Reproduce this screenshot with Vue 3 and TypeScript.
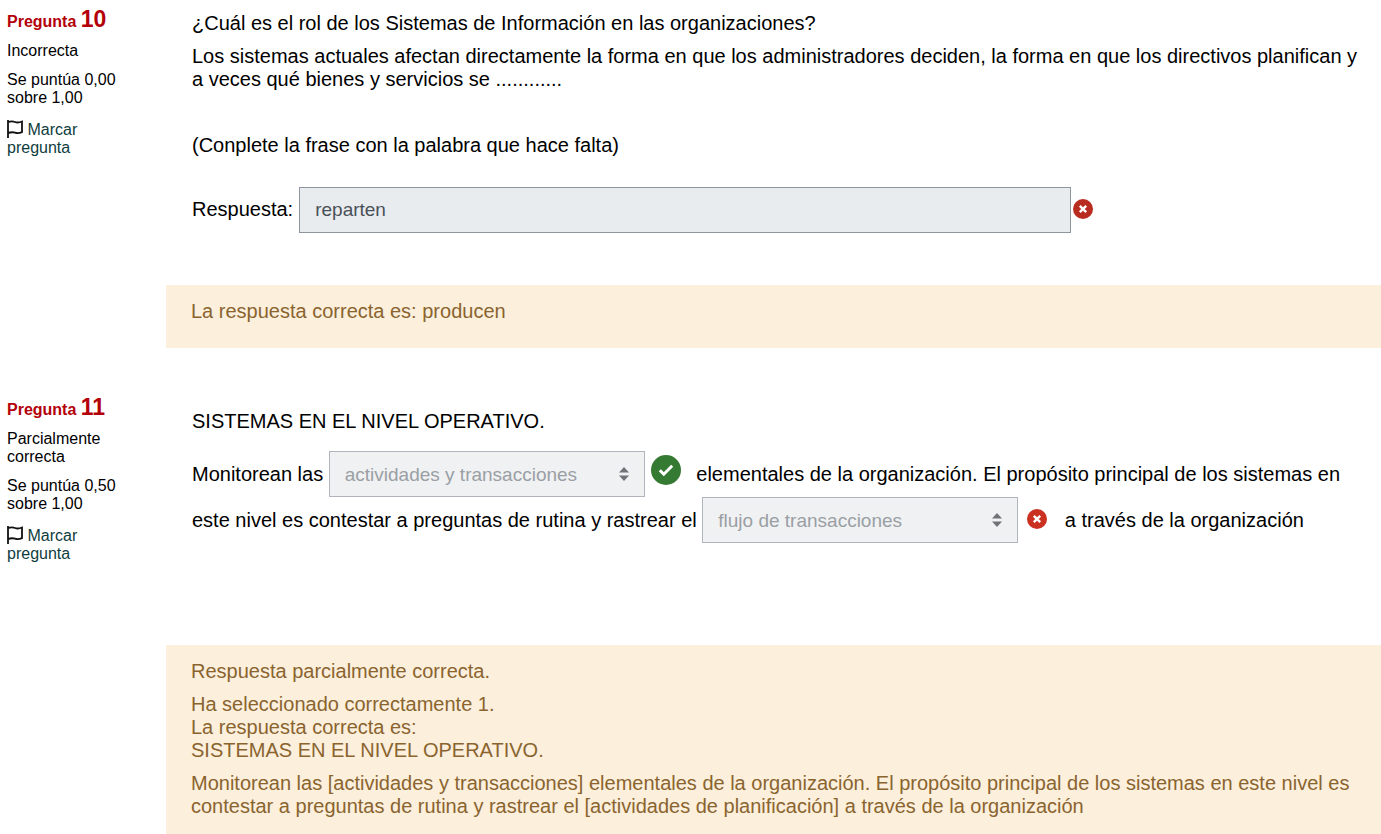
<script setup lang="ts">
import { ref } from 'vue'

const answer = ref('reparten')
const firstGap = ref('actividades y transacciones')
const secondGap = ref('flujo de transacciones')
</script>

<template>
  <main class="review">
    <section class="question">
      <aside class="info">
        <h3 class="number">Pregunta <span>10</span></h3>
        <div class="state">Incorrecta</div>
        <div class="grade">Se puntúa 0,00 sobre 1,00</div>
        <a class="flag" href="#">
          <svg width="16" height="18" viewBox="0 0 16 18" aria-hidden="true">
            <path d="M1 0v18M1 2.2C4 1 6 1.200 8 2s4 .8 7-.5v10.700c-3 1.300-5 1.200-7 .5s-4-.8-7 .5" />
          </svg>
          Marcar pregunta</a>
      </aside>
      <div class="content">
        <div class="formulation">
          <p>¿Cuál es el rol de los Sistemas de Información en las organizaciones?</p>
          <p>Los sistemas actuales afectan directamente la forma en que los administradores deciden, la forma en que los directivos planifican y a veces qué bienes y servicios se ............</p>
          <p><br></p>
          <p>(Conplete la frase con la palabra que hace falta)</p>
          <div class="answer">
            <label for="answer10">Respuesta:</label>
            <input id="answer10" v-model="answer" type="text" readonly>
            <svg class="cross" viewBox="0 0 20 20" role="img" aria-label="Incorrecta">
              <circle cx="10" cy="10" r="10" fill="#b92d20" />
              <path d="M6.800 6.800l6.400 6.400M13.200 6.800l-6.400 6.400" />
            </svg>
          </div>
        </div>
        <div class="feedback short">
          <p>La respuesta correcta es: producen</p>
        </div>
      </div>
    </section>

    <section class="question">
      <aside class="info">
        <h3 class="number">Pregunta <span>11</span></h3>
        <div class="state">Parcialmente correcta</div>
        <div class="grade">Se puntúa 0,50 sobre 1,00</div>
        <a class="flag" href="#">
          <svg width="16" height="18" viewBox="0 0 16 18" aria-hidden="true">
            <path d="M1 0v18M1 2.2C4 1 6 1.200 8 2s4 .8 7-.5v10.700c-3 1.300-5 1.200-7 .5s-4-.8-7 .5" />
          </svg>
          Marcar pregunta</a>
      </aside>
      <div class="content">
        <div class="formulation gaps">
          <p>SISTEMAS EN EL NIVEL OPERATIVO.</p>
          <p class="gap-text">
            Monitorean las
            <span class="picker">
              <select v-model="firstGap" disabled aria-label="Espacio en blanco 1">
                <option>actividades y transacciones</option>
              </select>
              <svg class="caret" viewBox="0 0 10 14" aria-hidden="true"><path d="M0 5.5L5 0l5 5.5zM0 8.5h10L5 14z" /></svg>
            </span>
            <svg class="check" viewBox="0 0 30 30" role="img" aria-label="Correcta">
              <circle cx="15" cy="15" r="15" fill="#357a32" />
              <path d="M8.8 15.2l4 4 8.400-8.400" />
            </svg>
            elementales de la organización. El propósito principal de los sistemas en este nivel es contestar a preguntas de rutina y rastrear el
            <span class="picker">
              <select v-model="secondGap" disabled aria-label="Espacio en blanco 2">
                <option>flujo de transacciones</option>
              </select>
              <svg class="caret" viewBox="0 0 10 14" aria-hidden="true"><path d="M0 5.5L5 0l5 5.5zM0 8.5h10L5 14z" /></svg>
            </span>
            <svg class="cross spaced" viewBox="0 0 20 20" role="img" aria-label="Incorrecta">
              <circle cx="10" cy="10" r="10" fill="#ca3120" />
              <path d="M6.800 6.800l6.400 6.400M13.200 6.800l-6.400 6.400" />
            </svg>
            a través de la organización
          </p>
        </div>
        <div class="feedback">
          <p>Respuesta parcialmente correcta.</p>
          <p>Ha seleccionado correctamente 1.<br>La respuesta correcta es:<br>SISTEMAS EN EL NIVEL OPERATIVO.</p>
          <p>Monitorean las [actividades y transacciones] elementales de la organización. El propósito principal de los sistemas en este nivel es contestar a preguntas de rutina y rastrear el [actividades de planificación] a través de la organización</p>
        </div>
      </div>
    </section>
  </main>
</template>

<style>
body {
  margin: 0;
  background: #fff;
}
</style>

<style scoped>
.review {
  font-family: "Liberation Sans", Arial, sans-serif;
  font-size: 20px;
  line-height: 23px;
  color: #000;
}
.question {
  display: flex;
  margin-bottom: 40px;
}
.question:last-child {
  margin-bottom: 0;
}
.info {
  flex: 0 0 129px;
  margin-right: 30px;
  padding: 6px 0 0 7px;
  font-size: 16px;
  line-height: 18px;
}
.number {
  margin: 0 0 7px;
  font-size: 16px;
  line-height: 26px;
  color: #b30009;
}
.number span {
  font-size: 23px;
}
.state {
  max-width: 112px;
  margin-bottom: 11px;
}
.grade {
  max-width: 112px;
  margin-bottom: 14px;
}
.flag {
  display: block;
  max-width: 90px;
  color: #0f3d3e;
  text-decoration: none;
}
.flag svg {
  margin-top: -2px;
  vertical-align: -3px;
  fill: none;
  stroke: #111;
  stroke-width: 1.8;
}
.content {
  flex: 1;
  min-width: 0;
}
p {
  margin: 0 0 10px;
}
.formulation {
  padding: 12px 16px 52px 26px;
}
.answer {
  display: flex;
  align-items: center;
  margin-top: 30px;
}
.answer label,
.answer .cross {
  margin-bottom: 2px;
}
.answer input {
  box-sizing: border-box;
  flex: 0 1 772px;
  min-width: 0;
  height: 46px;
  margin: 0 2px 0 6px;
  padding: 0 15px;
  border: 1px solid #8f959e;
  border-radius: 0;
  background: #e9ecef;
  color: #495057;
  font: inherit;
  font-size: 19px;
}
.cross {
  flex: none;
  width: 20px;
  height: 20px;
}
.cross path {
  stroke: #fff;
  stroke-width: 2.4;
}
.gaps {
  padding-top: 22px;
  padding-bottom: 102px;
}
.gap-text {
  margin: 18px 0 0;
}
.picker {
  display: inline-block;
  position: relative;
  vertical-align: baseline;
}
.picker select {
  display: block;
  box-sizing: border-box;
  appearance: none;
  width: 316px;
  height: 46px;
  padding: 0 30px 0 15px;
  border: 1px solid #b1b5bb;
  border-radius: 0;
  background: #f0f1f3;
  color: #9a9fa4;
  opacity: 1;
  font: inherit;
  font-size: 19px;
}
.caret {
  position: absolute;
  right: 16px;
  top: 16px;
  width: 10px;
  height: 14px;
  fill: #6f7377;
}
.check {
  width: 30px;
  height: 30px;
  margin: 0 10px 0 6px;
  vertical-align: -4px;
}
.check path {
  fill: none;
  stroke: #fff;
  stroke-width: 3;
}
.spaced {
  margin: 0 12px 0 9px;
  vertical-align: -2px;
}
.feedback {
  padding: 15px 16px 16px 25px;
  background: #fcefdc;
  color: #8a642f;
}
.feedback p:last-child {
  margin-bottom: 0;
}
.feedback.short {
  padding-bottom: 25px;
}
</style>
